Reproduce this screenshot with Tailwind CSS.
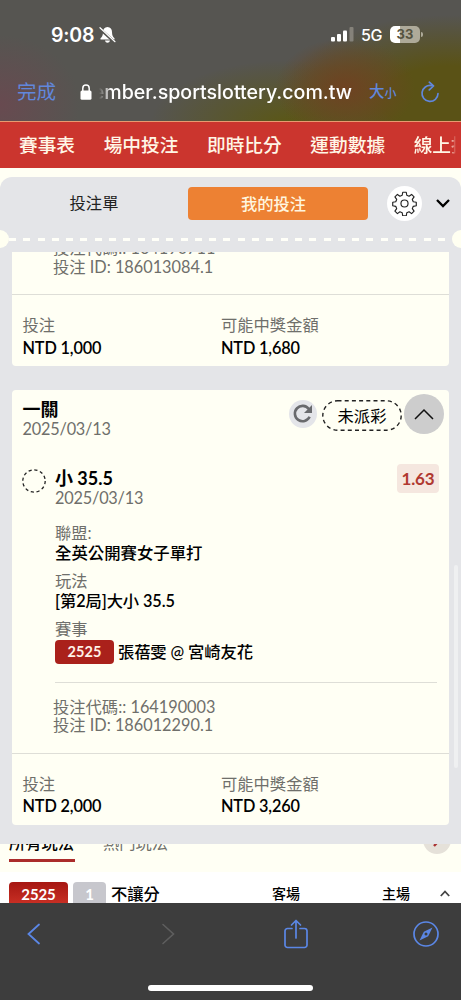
<!DOCTYPE html>
<html lang="zh-Hant">
<head>
<meta charset="utf-8">
<title>我的投注</title>
<script src="https://cdn.jsdelivr.net/npm/@tailwindcss/browser@4"></script>
</head>
<body class="w-[461px] h-[1000px] overflow-hidden bg-[#fffff4] font-['Lato','Noto_Sans_CJK_TC',sans-serif] text-[16.3px] text-black whitespace-nowrap">
<div class="flex flex-col w-[461px] h-[1000px] overflow-hidden">

  <!-- Status and address bars -->
  <header class="h-[121px] shrink-0 flex flex-col bg-[#565551] bg-[radial-gradient(ellipse_70px_50px_at_345px_88px,#6f4222_0%,#6b4622b0_45%,transparent_100%),radial-gradient(ellipse_170px_85px_at_450px_100px,#5a5216_0%,#5a5216_40%,transparent_100%),radial-gradient(ellipse_140px_65px_at_290px_125px,#5b5714_0%,transparent_100%),radial-gradient(ellipse_80px_70px_at_0px_105px,#684a50_0%,transparent_100%)] font-['Inter','Noto_Sans_CJK_TC',sans-serif]">
    <div class="h-[69px] shrink-0 flex items-start pt-[24px] pl-[51px] pr-[38px] text-white">
      <span class="text-[19.500px] leading-[22px] font-semibold w-[44px] tracking-[-0.2px]">9:08</span>
      <svg class="w-[17px] h-[18px] ml-[4px] mt-[2px]" viewBox="0 0 17 18"><path d="M8.5 1C5.6 1 4 3.2 4 6c0 3.500-1 4.800-2.500 6.300V13.500h14v-1.200C14 10.800 13 9.500 13 6c0-2.800-1.600-5-4.500-5zM6 14.600c.4 1.400 1.300 2.200 2.500 2.200s2.100-.8 2.500-2.200z" fill="#fff"/><path d="M.5 2.500l15.500 14" stroke="#565551" stroke-width="3"/><path d="M1 1.700l15 14" stroke="#fff" stroke-width="1.200" stroke-linecap="round"/></svg>
      <div class="flex-1"></div>
      <svg class="w-[24px] h-[16px] mt-[2px] mr-[7px]" viewBox="0 0 24 16"><rect x="1" y="11" width="4" height="4.500" rx="1" fill="#fff"/><rect x="7" y="8" width="4" height="7.500" rx="1" fill="#fff"/><rect x="13" y="4.500" width="4" height="11" rx="1" fill="#fff"/><rect x="19.500" y="1" width="4" height="14.500" rx="1" fill="#85827a"/></svg>
      <span class="text-[16px] leading-[22px] font-medium w-[22px] tracking-[-0.3px]">5G</span>
      <div class="ml-[7px] mt-[2px] w-[30px] h-[17px] rounded-[5px] bg-[linear-gradient(90deg,#fff_33%,#aeaa99_33%)] text-[13px] leading-[17px] font-bold text-[#55533f] text-center">33</div>
      <div class="w-[2px] h-[5px] ml-[1px] mt-[8px] rounded-r bg-[#aeaa99]"></div>
    </div>
    <div class="h-[46px] flex items-center pl-[17px] pr-[21px] text-[#6187dc]">
      <span class="w-[63px] text-[19.500px] leading-[30px]">完成</span>
      <svg class="w-[12px] h-[16px]" viewBox="0 0 12 16"><rect x=".5" y="6.500" width="11" height="9.300" rx="1.500" fill="#fff"/><path d="M2.800 7V4.200a3.200 3.200 0 0 1 6.400 0V7" fill="none" stroke="#fff" stroke-width="1.500"/></svg>
      <div class="ml-[7px] w-[253px] overflow-hidden flex justify-end text-white text-[19.600px] leading-[30px] font-medium [mask-image:linear-gradient(90deg,transparent,black_12px)]"><span>ember.sportslottery.com.tw</span></div>
      <span class="ml-[17px] text-[15.500px] font-medium leading-[30px]">大</span><span class="text-[12px] font-medium leading-[30px] pt-[3px]">小</span>
      <svg class="ml-auto w-[20px] h-[22px]" viewBox="0 0 20 22" fill="none" stroke="#6187dc" stroke-width="1.700" stroke-linecap="round" stroke-linejoin="round"><path d="M11.500 4.600A8 8 0 1 0 18 12.600"/><path d="M9.300 1.200l4.200 3.800-4.200 3.900"/></svg>
    </div>
  </header>

  <!-- Site navigation -->
  <nav class="h-[47px] shrink-0 flex items-center pl-[19px] gap-[28.600px] overflow-hidden bg-[#cb352e] border-t border-[#e89a70] text-[#fff6e6] text-[18.700px] leading-[30px] font-medium">
    <span>賽事表</span><span>場中投注</span><span>即時比分</span><span>運動數據</span><span class="w-[42px] shrink-0 overflow-hidden [mask-image:linear-gradient(90deg,black_36px,transparent_42px)]">線上投注</span>
  </nav>

  <!-- Bet slip panel -->
  <section class="mt-[9px] h-[667px] shrink-0 relative bg-[#e4e5e8] rounded-t-[12px] flex flex-col">
    <div class="h-[52px] flex items-center shrink-0">
      <span class="w-[188px] text-center text-[#222] leading-[24px]">投注單</span>
      <div class="w-[180px] h-[33px] rounded-[4px] bg-[#ed8133] text-[#fff5df] text-center leading-[33px] pr-[9px] font-medium">我的投注</div>
      <div class="ml-[19px] w-[35px] h-[35px] rounded-full bg-white flex items-center justify-center">
        <svg class="w-[25px] h-[25px]" viewBox="0 0 24 24" fill="none" stroke="#222" stroke-width="1.100" stroke-linejoin="round"><circle cx="12" cy="12" r="3.400"/><path d="M10.300 1.200h3.400l.5 2.900 2.200.9 2.400-1.700 2.400 2.400-1.700 2.400.9 2.200 2.900.5v3.400l-2.900.5-.9 2.200 1.700 2.400-2.400 2.400-2.400-1.700-2.200.9-.5 2.900h-3.400l-.5-2.900-2.200-.9-2.400 1.700-2.400-2.400 1.700-2.400-.9-2.200-2.900-.5v-3.400l2.900-.5.9-2.200-1.700-2.400 2.400-2.400 2.400 1.700 2.200-.9z"/></svg>
      </div>
      <svg class="ml-[14px] w-[14px] h-[9px]" viewBox="0 0 14 9" fill="none" stroke="#000" stroke-width="2.300"><path d="M1 1l6 6 6-6"/></svg>
    </div>
    <div class="h-[20px] shrink-0 flex items-center overflow-hidden">
      <div class="w-[18px] h-[18px] -ml-[9px] shrink-0 rounded-full bg-[#fffff1]"></div>
      <div class="flex-1 h-[3px] mt-[1px] bg-[repeating-linear-gradient(90deg,#fffff8_0px,#fffff8_7px,transparent_7px,transparent_14.300px)]"></div>
      <div class="w-[18px] h-[18px] -mr-[9px] shrink-0 rounded-full bg-[#fffff1]"></div>
    </div>

    <article class="mt-[3px] ml-[12px] w-[437px] h-[114px] shrink-0 overflow-hidden rounded-b-[4px] bg-[#fffff4] flex flex-col">
      <div class="h-[43px] pl-[41px] shrink-0 border-b border-[#deded7] text-[#6f6f6b] leading-[18px] box-border">
        <div class="-mt-[13px]">投注代碼:: 164190711</div>
        <div class="pt-px">投注 ID: 186013084.1</div>
      </div>
      <div class="grid grid-cols-[198.500px_1fr] pl-[10.500px] pt-[19px] leading-[22px]">
        <span class="text-[#6f6f6b]">投注</span><span class="text-[#6f6f6b]">可能中獎金額</span>
        <span class="font-semibold tracking-[-0.15px] pt-px">NTD 1,000</span><span class="font-semibold tracking-[-0.15px] pt-px">NTD 1,680</span>
      </div>
    </article>

    <article class="mt-[24px] ml-[12px] w-[437px] h-[435px] shrink-0 rounded-[4px] bg-[#fffff4] flex flex-col">
      <div class="h-[76px] shrink-0 flex items-start pl-[10.500px] pr-[5px] pt-[4px]">
        <div class="flex-1 pt-[5px] leading-[20px]">
          <div class="font-bold text-[18px]">一關</div>
          <div class="text-[#6f6f6b] tracking-[-0.2px]">2025/03/13</div>
        </div>
        <div class="w-[28px] h-[28px] mt-[6px] rounded-full bg-[#e4e5e9] flex items-center justify-center">
          <svg class="w-[20px] h-[20px]" viewBox="0 0 20 20"><path d="M16.600 12.800A7.700 7.700 0 1 1 15.800 5" fill="none" stroke="#696a6d" stroke-width="2.600"/><path d="M19 1v8h-8z" fill="#696a6d"/></svg>
        </div>
        <div class="relative ml-[5px] mr-[2px] w-[80px] h-[31px] mt-[6px] text-center leading-[31px]">
          <svg class="absolute inset-0 w-[80px] h-[31px]" viewBox="0 0 80 31"><rect x=".8" y=".8" width="78.400" height="29.400" rx="14.700" fill="none" stroke="#222" stroke-width="1.400" stroke-dasharray="4 3.200"/></svg>未派彩
        </div>
        <div class="w-[40px] h-[40px] rounded-full bg-[#cdcdcd] flex items-center justify-center">
          <svg class="w-[20px] h-[12px]" viewBox="0 0 20 12" fill="none" stroke="#111" stroke-width="1.500"><path d="M1 11l9-9 9 9"/></svg>
        </div>
      </div>

      <div class="flex h-[287px] shrink-0 pl-[10px]">
        <svg class="w-[24px] h-[24px] mt-[3px] shrink-0" viewBox="0 0 24 24"><circle cx="12" cy="12" r="11.200" fill="none" stroke="#222" stroke-width="1.300" stroke-dasharray="3.200 2.660"/></svg>
        <div class="ml-[9px] w-[382px] leading-[20px]">
          <div class="flex justify-between h-[57px]">
            <div class="pt-[2px]">
              <div class="font-bold text-[18px]">小 35.5</div>
              <div class="text-[#6f6f6b] tracking-[-0.2px]">2025/03/13</div>
            </div>
            <div class="-mt-[2px] -mr-[2px] w-[42px] h-[29px] rounded-[4px] bg-[#f5e7df] text-[#b0382f] font-bold text-[17px] leading-[30px] text-center tracking-[-0.100px]">1.63</div>
          </div>
          <div class="text-[#6f6f6b] leading-[19px]">聯盟:</div>
          <div class="font-medium leading-[19px] mt-px text-[16.400px]">全英公開賽女子單打</div>
          <div class="text-[#6f6f6b] leading-[19px] mt-[9px]">玩法</div>
          <div class="font-semibold leading-[20px] mt-px"><span class="tracking-[-0.1px]">[<span class="font-medium">第</span>2<span class="font-medium">局</span>]<span class="font-medium">大小</span> 35.5</span></div>
          <div class="text-[#6f6f6b] leading-[19px] mt-[8px]">賽事</div>
          <div class="flex items-center h-[24px] mt-[2px] font-medium">
            <span class="w-[59px] h-[24px] rounded-[4px] bg-[#aa211b] text-[#fff2e8] text-[14.500px] leading-[24px] font-bold text-center tracking-[0.100px]">2525</span>
            <span class="ml-[4px] leading-[24px] tracking-[-0.1px]">張蓓雯 @ 宮崎友花</span>
          </div>
          <div class="h-px bg-[#deded7] mt-[18px]"></div>
          <div class="mt-[15px] -ml-[2px] text-[#6f6f6b] leading-[18px]">
            <div>投注代碼:: 164190003</div>
            <div>投注 ID: 186012290.1</div>
          </div>
        </div>
      </div>
      <div class="grid grid-cols-[198.500px_1fr] pl-[10.500px] pt-[19px] leading-[22px] border-t border-[#deded7]">
        <span class="text-[#6f6f6b]">投注</span><span class="text-[#6f6f6b]">可能中獎金額</span>
        <span class="font-semibold tracking-[-0.15px]">NTD 2,000</span><span class="font-semibold tracking-[-0.15px]">NTD 3,260</span>
      </div>
    </article>
    <div class="absolute left-[454px] top-[388px] w-[4px] h-[203px] rounded bg-[#eff0f1]"></div>
  </section>

  <!-- Market list behind the panel -->
  <main class="h-[59px] shrink-0 overflow-hidden flex flex-col">
    <div class="h-[28px] shrink-0 overflow-hidden flex items-start pl-[9px] pr-[10px] leading-[22px]">
      <div class="w-[66px] h-[30px] -mt-[12px] border-b-[3px] border-[#ab2c2b] font-medium">所有玩法</div>
      <div class="ml-[28px] -mt-[12px] text-[#6f6f6b]">熱門玩法</div>
      <div class="ml-auto w-[28px] h-[28px] -mt-[18px] rounded-full bg-[#e5e1d9] flex items-center justify-center">
        <svg class="w-[8px] h-[14px]" viewBox="0 0 8 14" fill="none" stroke="#a33" stroke-width="2.400"><path d="M1 1l5.500 6L1 13"/></svg>
      </div>
    </div>
    <div class="flex-1 min-h-0 bg-white flex items-start pt-[10px] pl-[9px] leading-[24px] font-medium">
      <span class="w-[59px] h-[26px] rounded-[4px] bg-[linear-gradient(#a61712,#cf3428)] text-white text-[15px] font-bold text-center tracking-[-0.100px]">2525</span>
      <span class="ml-[5px] w-[33px] h-[26px] rounded-[4px] bg-[#c7c7cd] text-white text-[15px] font-bold text-center">1</span>
      <span class="ml-[5px] w-[161px]">不讓分</span>
      <span class="w-[110px] text-[14px]">客場</span>
      <span class="w-[58px] text-[14px]">主場</span>
      <svg class="w-[10px] h-[7px] mt-[8px]" viewBox="0 0 10 7" fill="none" stroke="#444" stroke-width="1.800"><path d="M.8 6L5 1.500 9.200 6"/></svg>
    </div>
  </main>

  <!-- Browser toolbar -->
  <footer class="h-[97px] shrink-0 bg-[#3d3d3d] flex flex-col items-center">
    <div class="w-full h-[62px] flex items-center pl-[27px] pr-[22px] justify-between">
      <svg class="w-[14px] h-[22px]" viewBox="0 0 14 22" fill="none" stroke="#5b87e6" stroke-width="1.800" stroke-linecap="round"><path d="M12 1.500L1.500 11 12 20.500"/></svg>
      <svg class="w-[14px] h-[22px] ml-[10px]" viewBox="0 0 14 22" fill="none" stroke="#5e5e5e" stroke-width="1.600" stroke-linecap="round"><path d="M2 1.500L12.500 11 2 20.500"/></svg>
      <svg class="w-[24px] h-[30px] -mr-[5px]" viewBox="0 0 24 30" fill="none" stroke="#5b87e6" stroke-width="1.700" stroke-linecap="round" stroke-linejoin="round"><path d="M8 9.500H3.500A2.500 2.500 0 0 0 1 12v14a2.500 2.500 0 0 0 2.500 2.500h17A2.500 2.500 0 0 0 23 26V12a2.500 2.500 0 0 0-2.500-2.500H16"/><path d="M12 19V1.500M7.500 6L12 1.500 16.500 6"/></svg>
      <svg class="w-[26px] h-[26px]" viewBox="0 0 26 26"><circle cx="13" cy="13" r="12" fill="none" stroke="#5b87e6" stroke-width="1.700"/><path d="M19.500 6.500l-4.300 8.700-8.700 4.300 4.300-8.700z" fill="#5b87e6"/><circle cx="13" cy="13" r="1.500" fill="#3d3d3d"/></svg>
    </div>
    <div class="w-[165px] h-[6px] mt-[20px] rounded-full bg-white"></div>
  </footer>
</div>
</body>
</html>
